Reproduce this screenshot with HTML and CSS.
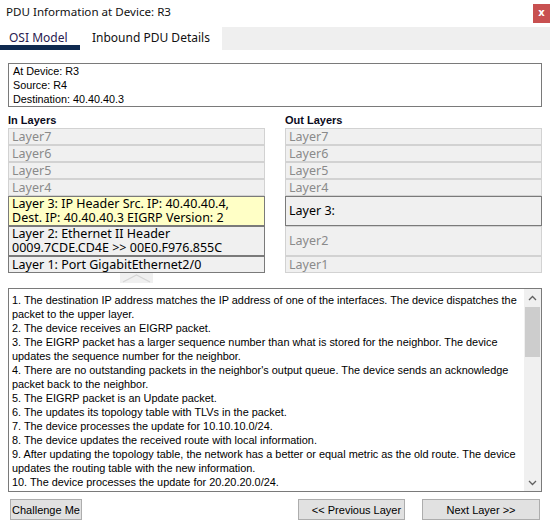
FILE: index.html
```html
<!DOCTYPE html>
<html>
<head>
<meta charset="utf-8">
<link rel="stylesheet" href="styles.css">
</head>
<body>
<div class="window">
  <div class="titlebar">
    <span class="title">PDU Information at Device: R3</span>
    <div class="close">x</div>
  </div>
  <div class="tabs">
    <div class="tab active">OSI Model</div>
    <div class="tab">Inbound PDU Details</div>
    <div class="tab-fill"></div>
  </div>
  <div class="info">At Device: R3<br>Source: R4<br>Destination: 40.40.40.3</div>
  <div class="layers">
    <div class="col">
      <div class="col-title">In Layers</div>
      <div class="row">Layer7</div>
      <div class="row">Layer6</div>
      <div class="row">Layer5</div>
      <div class="row">Layer4</div>
      <div class="row tall on hl"><div class="rl">Layer 3: IP Header Src. IP: 40.40.40.4,</div><div class="rl">Dest. IP: 40.40.40.3 EIGRP Version: 2</div></div>
      <div class="row tall on"><div class="rl">Layer 2: Ethernet II Header</div><div class="rl">0009.7CDE.CD4E &gt;&gt; 00E0.F976.855C</div></div>
      <div class="row on">Layer 1: Port GigabitEthernet2/0</div>
      <div class="hint">
        <svg width="33" height="10" viewBox="0 0 33 10"><rect x="0" y="0" width="33" height="10" fill="#f0f0f0"/><polyline points="3,9 16.5,2 30,9" fill="none" stroke="#d6d6d6" stroke-width="1.2"/></svg>
      </div>
    </div>
    <div class="col">
      <div class="col-title">Out Layers</div>
      <div class="row">Layer7</div>
      <div class="row">Layer6</div>
      <div class="row">Layer5</div>
      <div class="row">Layer4</div>
      <div class="row tall on">Layer 3:</div>
      <div class="row tall">Layer2</div>
      <div class="row">Layer1</div>
    </div>
  </div>
  <div class="details">
    <div class="details-text">
      <div class="line">1. The destination IP address matches the IP address of one of the interfaces. The device dispatches the</div>
      <div class="line">packet to the upper layer.</div>
      <div class="line">2. The device receives an EIGRP packet.</div>
      <div class="line">3. The EIGRP packet has a larger sequence number than what is stored for the neighbor. The device</div>
      <div class="line">updates the sequence number for the neighbor.</div>
      <div class="line">4. There are no outstanding packets in the neighbor's output queue. The device sends an acknowledge</div>
      <div class="line">packet back to the neighbor.</div>
      <div class="line">5. The EIGRP packet is an Update packet.</div>
      <div class="line">6. The updates its topology table with TLVs in the packet.</div>
      <div class="line">7. The device processes the update for 10.10.10.0/24.</div>
      <div class="line">8. The device updates the received route with local information.</div>
      <div class="line">9. After updating the topology table, the network has a better or equal metric as the old route. The device</div>
      <div class="line">updates the routing table with the new information.</div>
      <div class="line">10. The device processes the update for 20.20.20.0/24.</div>
    </div>
    <div class="scrollbar">
      <div class="sb-arrow">
        <svg width="9" height="6" viewBox="0 0 9 6"><polyline points="1,5 4.5,1.5 8,5" fill="none" stroke="#606060" stroke-width="1.3"/></svg>
      </div>
      <div class="sb-track"><div class="sb-thumb"></div></div>
      <div class="sb-arrow">
        <svg width="9" height="6" viewBox="0 0 9 6"><polyline points="1,1 4.5,4.5 8,1" fill="none" stroke="#606060" stroke-width="1.3"/></svg>
      </div>
    </div>
  </div>
  <div class="buttons">
    <button class="btn challenge">Challenge Me</button>
    <div class="spacer"></div>
    <button class="btn prev">&lt;&lt; Previous Layer</button>
    <button class="btn next">Next Layer &gt;&gt;</button>
  </div>
</div>
</body>
</html>
```
FILE: styles.css
```css
* { box-sizing: border-box; }
html, body { margin: 0; padding: 0; background: #fff; }
.window {
  width: 550px;
  height: 528px;
  background: #fff;
  display: flex;
  flex-direction: column;
  overflow: hidden;
}
.titlebar {
  height: 27px;
  display: flex;
  align-items: flex-start;
  justify-content: space-between;
}
.title {
  font-family: "Noto Sans", sans-serif;
  font-size: 11.6px;
  line-height: 16px;
  color: #111;
  margin: 4px 0 0 6px;
}
.close {
  width: 17px;
  height: 19px;
  margin-top: 4px;
  background: #c85050;
  color: #fff;
  font-family: "DejaVu Sans", sans-serif;
  font-weight: bold;
  font-size: 10px;
  line-height: 18px;
  text-align: center;
}
.tabs {
  height: 23px;
  display: flex;
}
.tab {
  font-family: "Noto Sans", sans-serif;
  font-size: 12px;
  color: #111;
  line-height: 22px;
  padding: 0 12px;
}
.tab.active {
  width: 80px;
  padding: 0 0 0 9px;
  border-bottom: 5px solid #0f2a50;
  color: #2a2050;
}
.tab-fill {
  flex: 1;
  background: #efefef;
}
.info {
  margin: 13px 8px 0 8px;
  border: 1px solid #7a7a7a;
  padding: 0 4px;
  font-family: "Liberation Sans", Arial, sans-serif;
  font-size: 10.8px;
  line-height: 14px;
  color: #000;
}
.layers {
  display: flex;
  gap: 20px;
  margin: 6px 8px 0 8px;
}
.col {
  width: 257px;
  display: flex;
  flex-direction: column;
}
.col-title {
  font-family: "Liberation Sans", Arial, sans-serif;
  font-weight: bold;
  font-size: 11px;
  line-height: 15px;
  color: #0a0a20;
}
.row {
  height: 17px;
  border: 1px solid #d2d2d2;
  background: #f0f0f0;
  color: #8a8a8a;
  font-family: "Noto Sans", sans-serif;
  font-size: 12.5px;
  line-height: 14px;
  padding: 0 3px;
  display: flex;
  flex-direction: column;
  justify-content: center;
  white-space: nowrap;
}
.rl { height: 14px; }
.row.tall { height: 30px; }
.row.on {
  border-color: #7a7a7a;
  color: #000;
}
.row.hl { background: #ffffc6; }
.hint {
  height: 10px;
  display: flex;
  padding-left: 112px;
}
.hint svg { display: block; }
.details {
  margin: 5px 8px 0 8px;
  height: 204px;
  border: 1px solid #7a7a7a;
  display: flex;
}
.details-text {
  flex: 1;
  overflow: hidden;
  padding: 4px 0 0 3px;
  font-family: "Liberation Sans", Arial, sans-serif;
  font-size: 10.9px;
  line-height: 14px;
  color: #000;
}
.line { white-space: nowrap; }
.scrollbar {
  width: 17px;
  background: #f0f0f0;
  display: flex;
  flex-direction: column;
}
.sb-arrow {
  height: 17px;
  display: flex;
  align-items: center;
  justify-content: center;
}
.sb-track {
  flex: 1;
  padding-top: 1px;
}
.sb-thumb {
  height: 50px;
  background: #cdcdcd;
  margin: 0 1px;
}
.buttons {
  display: flex;
  margin: 7px 10px 0 10px;
  gap: 17px;
}
.spacer { flex: 1; }
.btn {
  height: 21px;
  background: #e1e1e1;
  border: 1px solid #adadad;
  border-radius: 0;
  font-family: "Liberation Sans", Arial, sans-serif;
  font-size: 11px;
  color: #000;
  padding: 0;
  margin: 0;
}
.challenge { width: 72px; }
.prev { width: 107px; padding-left: 10px; }
.next { width: 118px; }
```
